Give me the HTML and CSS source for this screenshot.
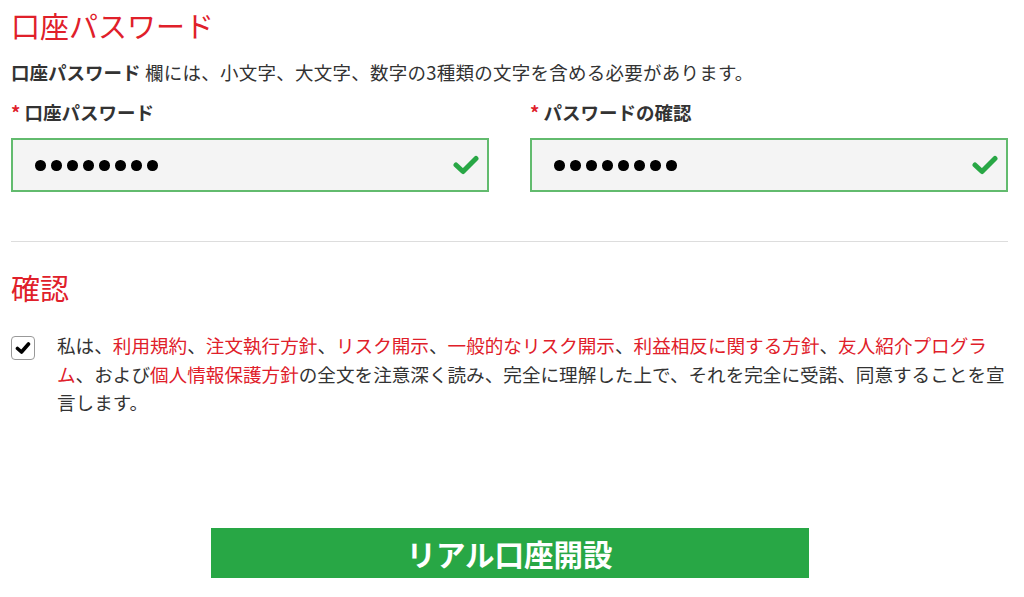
FILE: index.html
```html
<!DOCTYPE html>
<html lang="ja">
<head>
<meta charset="utf-8">
<title>口座パスワード</title>
<link rel="stylesheet" href="styles.css">
</head>
<body>
<main class="page">
  <h2 class="section-title">口座パスワード</h2>
  <p class="note"><strong>口座パスワード</strong> 欄には、小文字、大文字、数字の3種類の文字を含める必要があります。</p>
  <div class="fields">
    <div class="field">
      <label class="label"><span class="req">*</span> 口座パスワード</label>
      <div class="input">
        <div class="dots"><i></i><i></i><i></i><i></i><i></i><i></i><i></i><i></i></div>
        <svg class="ok" viewBox="0 0 26 20" width="26" height="20"><polyline points="3,10 10,16.5 23,3.5" fill="none" stroke="#28a745" stroke-width="5" stroke-linecap="round" stroke-linejoin="round"/></svg>
      </div>
    </div>
    <div class="field">
      <label class="label"><span class="req">*</span> パスワードの確認</label>
      <div class="input">
        <div class="dots"><i></i><i></i><i></i><i></i><i></i><i></i><i></i><i></i></div>
        <svg class="ok" viewBox="0 0 26 20" width="26" height="20"><polyline points="3,10 10,16.5 23,3.5" fill="none" stroke="#28a745" stroke-width="5" stroke-linecap="round" stroke-linejoin="round"/></svg>
      </div>
    </div>
  </div>
  <hr class="divider">
  <h2 class="section-title confirm-title">確認</h2>
  <div class="agree">
    <span class="checkbox">
      <svg viewBox="0 0 16 14" width="16" height="14"><polyline points="2.5,7.5 6.5,11 13.5,3" fill="none" stroke="#000" stroke-width="3.6" stroke-linecap="round" stroke-linejoin="round"/></svg>
    </span>
    <p class="agree-text">私は、<a>利用規約</a>、<a>注文執行方針</a>、<a>リスク開示</a>、<a>一般的なリスク開示</a>、<a>利益相反に関する方針</a>、<a>友人紹介プログラム</a>、および<a>個人情報保護方針</a>の全文を注意深く読み、完全に理解した上で、それを完全に受諾、同意することを宣言します。</p>
  </div>
  <div class="actions">
    <button class="submit" type="button">リアル口座開設</button>
  </div>
</main>
</body>
</html>
```

FILE: styles.css
```css
html, body {
  margin: 0;
  padding: 0;
  background: #fff;
}
body {
  font-family: "Noto Sans CJK JP", "Noto Sans", "Liberation Sans", sans-serif;
  color: #333;
}
.page {
  width: 997px;
  padding: 0 0 0 11px;
}
.section-title {
  margin: 5px 0 0;
  font-size: 29px;
  line-height: 40px;
  font-weight: 400;
  color: #e0202a;
}
.note {
  margin: 13px 0 0;
  font-size: 18.5px;
  line-height: 28px;
  letter-spacing: 0.25px;
}
.note strong {
  font-weight: 700;
  letter-spacing: 0;
}
.fields {
  display: grid;
  grid-template-columns: 478px 478px;
  column-gap: 41px;
  margin-top: 12px;
}
.label {
  display: block;
  font-size: 18.5px;
  line-height: 28px;
  font-weight: 700;
}
.req {
  color: #e0202a;
}
.input {
  box-sizing: border-box;
  margin-top: 12px;
  height: 54px;
  border: 2px solid #62bb6e;
  background: #f4f4f4;
  display: flex;
  align-items: center;
  justify-content: space-between;
  padding: 0 8px 0 22px;
}
.dots {
  display: flex;
  gap: 5.5px;
  margin-top: 1px;
}
.dots i {
  display: block;
  width: 10.5px;
  height: 10.5px;
  border-radius: 50%;
  background: #000;
}
.ok {
  display: block;
}
.divider {
  margin: 49px 0 0;
  border: 0;
  border-top: 1px solid #ddd;
  width: 997px;
}
.confirm-title {
  margin-top: 25px;
}
.agree {
  display: flex;
  align-items: flex-start;
  margin-top: 24px;
}
.checkbox {
  box-sizing: border-box;
  flex: none;
  width: 24px;
  height: 24px;
  margin-top: 5px;
  border: 1.5px solid #999;
  border-radius: 4px;
  background: #fff;
  display: flex;
  align-items: center;
  justify-content: center;
}
.checkbox svg {
  display: block;
}
.agree-text {
  margin: 0 0 0 22px;
  width: 952px;
  font-size: 18.6px;
  line-height: 28.5px;
}
.agree-text a {
  color: #e0202a;
}
.actions {
  display: flex;
  justify-content: center;
  margin-top: 111px;
}
.submit {
  width: 598px;
  height: 50px;
  border: 0;
  background: #28a745;
  color: #fff;
  font-family: "Noto Sans CJK JP", "Noto Sans", sans-serif;
  font-size: 29.5px;
  font-weight: 700;
  line-height: 50px;
  padding: 0;
}
```
